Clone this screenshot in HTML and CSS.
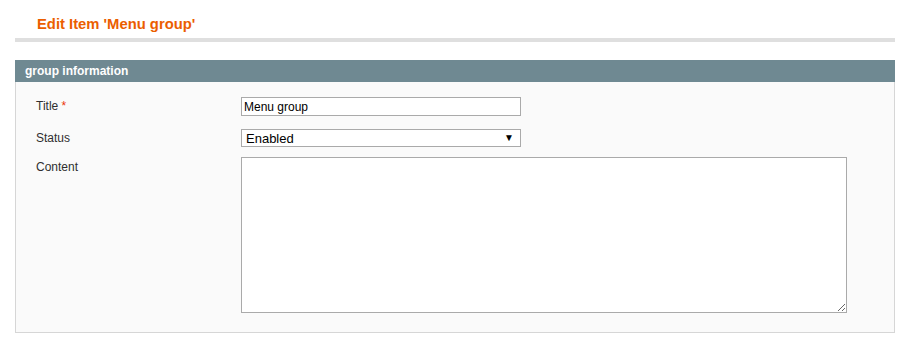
FILE: index.html
```html
<!DOCTYPE html>
<html lang="en">
  <head>
    <meta charset="UTF-8" />
    <meta name="viewport" content="width=device-width, initial-scale=1.0" />
    <title>Edit Item</title>
    <link rel="stylesheet" href="styles.css">
  </head>
  <body>
    <div class="content-header">
      <h3>Edit Item 'Menu group'</h3>
    </div>

    <div class="entry-edit">
      <div class="entry-edit-head">
        <h4>group information</h4>
      </div>
      <form class="fieldset" id="editForm">
        <div class="form-row">
          <label for="title">Title <span class="required">*</span></label>
          <input type="text" id="title" name="title" value="Menu group" class="input-text" />
        </div>
        <div class="form-row">
          <label for="status">Status</label>
          <div class="select-wrap">
            <select id="status" name="status">
              <option value="1" selected>Enabled</option>
              <option value="0">Disabled</option>
            </select>
          </div>
        </div>
        <div class="form-row">
          <label for="content">Content</label>
          <textarea id="content" name="content"></textarea>
        </div>
      </form>
    </div>
  </body>
</html>
```

FILE: styles.css
```css
* {
  margin: 0;
  padding: 0;
  box-sizing: border-box;
}

body {
  font-family: Arial, "Liberation Sans", sans-serif;
  font-size: 12px;
  background-color: #fff;
  color: #2f2f2f;
  padding: 0 5px 0 15px;
}

.content-header {
  padding: 14px 0 4px 22px;
  border-bottom: 4px solid #dfdfdf;
}

.content-header h3 {
  font-size: 14.8px;
  line-height: 20px;
  font-weight: bold;
  color: #eb5e00;
}

.entry-edit {
  margin-top: 18px;
}

.entry-edit-head {
  background-color: #6f8992;
  height: 22px;
  padding: 0 10px;
}

.entry-edit-head h4 {
  font-size: 12px;
  line-height: 22px;
  font-weight: bold;
  color: #fff;
}

.fieldset {
  background-color: #fafafa;
  border: 1px solid #d6d6d6;
  border-top: none;
  padding: 15px 20px 19px;
  display: flex;
  flex-direction: column;
}

.form-row {
  display: grid;
  grid-template-columns: 205px auto;
  align-items: start;
}

.form-row + .form-row {
  margin-top: 13px;
}

.form-row:last-child {
  margin-top: 9px;
}

.form-row label {
  line-height: 19px;
}

.form-row:last-child label {
  line-height: 17px;
  padding-top: 2px;
}

.required {
  color: #eb340a;
}

.input-text {
  width: 280px;
  height: 19px;
  border: 1px solid #aaa;
  background-color: #fff;
  font-family: Arial, "Liberation Sans", sans-serif;
  font-size: 12px;
  color: #000;
  padding: 0 2px;
  outline: none;
}

.select-wrap {
  position: relative;
  width: 280px;
}

.select-wrap::after {
  content: "▼";
  position: absolute;
  right: 7px;
  top: 3px;
  font-size: 10px;
  color: #000;
  pointer-events: none;
}

.select-wrap select {
  appearance: none;
  -webkit-appearance: none;
  width: 280px;
  height: 18px;
  border: 1px solid #aaa;
  border-radius: 0;
  background-color: #fff;
  font-family: Arial, "Liberation Sans", sans-serif;
  font-size: 13px;
  color: #000;
  padding: 0 4px;
  outline: none;
}

textarea {
  width: 606px;
  height: 156px;
  border: 1px solid #aaa;
  background-color: #fff;
  font-family: Arial, "Liberation Sans", sans-serif;
  font-size: 12px;
  padding: 2px;
  outline: none;
}
```
